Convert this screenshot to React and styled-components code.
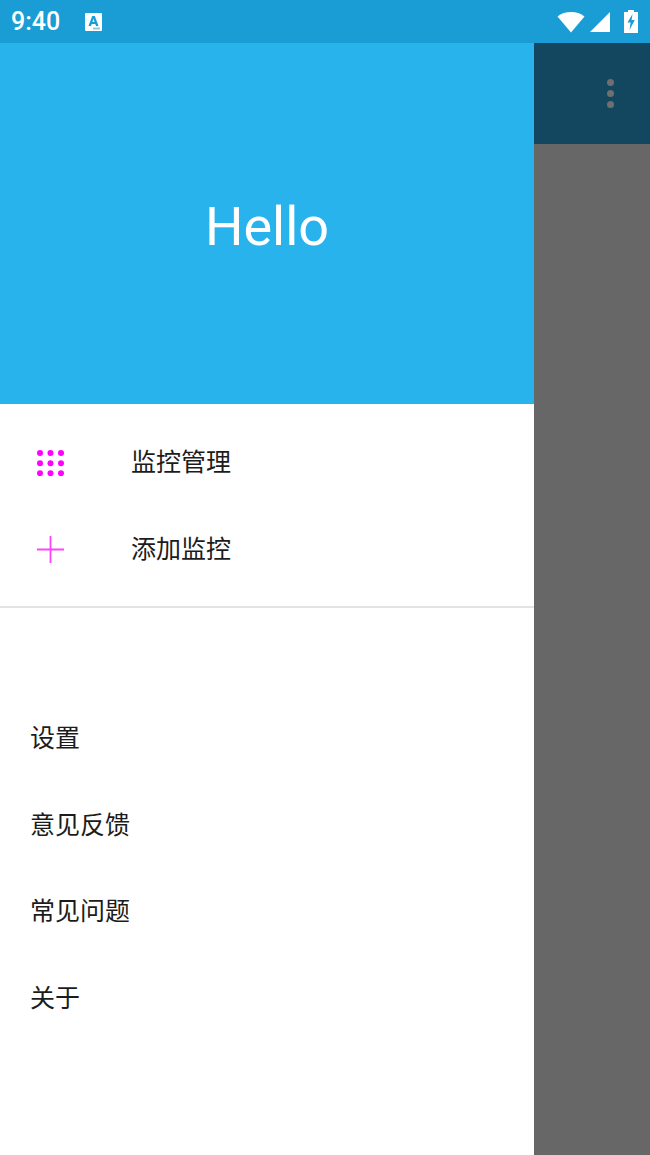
import React from 'react';
import styled, { createGlobalStyle } from 'styled-components';

const Global = createGlobalStyle`
  html, body {
    margin: 0;
    padding: 0;
    background: #fff;
  }
  body {
    font-family: Roboto, "Noto Sans CJK SC", sans-serif;
  }
`;

const Screen = styled.div`
  width: 650px;
  height: 1155px;
  display: flex;
  flex-direction: column;
  overflow: hidden;
`;

const StatusBar = styled.div`
  height: 43px;
  flex: none;
  display: flex;
  align-items: center;
  padding: 0 12px 0 11px;
  box-sizing: border-box;
  background: #199dd4;
  color: #fff;
`;

const Clock = styled.span`
  font-size: 25px;
  font-weight: 500;
  line-height: 43px;
  width: 74px;
`;

const StatusRight = styled.div`
  margin-left: auto;
  display: flex;
  align-items: center;
`;

const Body = styled.div`
  flex: 1;
  display: flex;
  min-height: 0;
`;

const Drawer = styled.aside`
  width: 534px;
  flex: none;
  display: flex;
  flex-direction: column;
  background: #fff;
`;

const DrawerHeader = styled.div`
  height: 361px;
  flex: none;
  display: flex;
  align-items: center;
  justify-content: center;
  background: #28b3ed;
  color: #fff;
  font-size: 54px;
`;

const Hello = styled.span`
  position: relative;
  top: 3px;
`;

const MainList = styled.div`
  padding-top: 15px;
  padding-bottom: 13px;
  border-bottom: 2px solid #e3e3e3;
`;

const IconRow = styled.div`
  height: 87px;
  display: flex;
  align-items: center;
  padding-left: 37px;
`;

const IconSlot = styled.div`
  width: 94px;
  flex: none;
  display: flex;
  align-items: center;
`;

const ItemLabel = styled.span`
  font-family: "Noto Sans CJK SC", sans-serif;
  font-size: 25px;
  margin-bottom: 6px;
  color: #1c1c1c;
`;

const PlainList = styled.div`
  padding-top: 88px;
`;

const PlainRow = styled.div`
  height: 86.6px;
  display: flex;
  align-items: center;
  padding-left: 30px;
`;

const Scrim = styled.div`
  flex: 1;
  display: flex;
  flex-direction: column;
  background: #676767;
`;

const Toolbar = styled.div`
  height: 101px;
  flex: none;
  display: flex;
  align-items: center;
  justify-content: flex-end;
  padding-right: 36px;
  background: #134760;
`;

const MoreDots = styled.div`
  display: flex;
  flex-direction: column;
  gap: 4px;
`;

const Dot = styled.span`
  width: 7px;
  height: 7px;
  border-radius: 50%;
  background: #6f6f6f;
`;

const AppBadge = () => (
  <svg width="17" height="18" viewBox="0 0 17 18" style={{ display: 'block' }}>
    <rect width="17" height="18" rx="1" fill="#fff" />
    <path d="M3.5 13 L7.2 3 H9.8 L13.5 13 H11 L10.3 11 H6.7 L6 13 Z M7.4 9 H9.6 L8.5 5.8 Z" fill="#199dd4" fillRule="evenodd" />
    <rect x="8" y="14.5" width="7" height="2" fill="#8ccbe6" />
  </svg>
);

const WifiIcon = () => (
  <svg width="28" height="22" viewBox="0 0 28 22" style={{ display: 'block' }}>
    <path d="M0.5 5.5 C4 2.3 9 1 14 1 C19 1 24 2.3 27.5 5.5 L14 21.5 Z" fill="#fff" />
  </svg>
);

const SignalIcon = () => (
  <svg width="20" height="20" viewBox="0 0 20 20" style={{ display: 'block', marginLeft: 5 }}>
    <path d="M0 20 L20 0 V20 Z" fill="#fff" />
  </svg>
);

const BatteryIcon = () => (
  <svg width="14" height="23" viewBox="0 0 14 23" style={{ display: 'block', marginLeft: 14 }}>
    <path d="M4 0 H10 V2 H14 V23 H0 V2 H4 Z" fill="#fff" />
    <path d="M8.5 4 L3.5 12.5 H6.6 L5.5 20 L10.8 10 H7.6 Z" fill="#199dd4" />
  </svg>
);

const GridIcon = () => (
  <svg width="27" height="26" viewBox="0 0 27 26" style={{ display: 'block' }}>
    {[3, 13.2, 23.2].map(y =>
      [3, 13.5, 24].map(x => <circle key={`${x}-${y}`} cx={x} cy={y} r="3" fill="#ff00ff" />)
    )}
  </svg>
);

const PlusIcon = () => (
  <svg width="27" height="27" viewBox="0 0 27 27" style={{ display: 'block' }}>
    <path d="M13.5 0 V27 M0 13.5 H27" stroke="#ff44ff" strokeWidth="1.8" fill="none" />
  </svg>
);

const mainItems = [
  { label: '监控管理', icon: <GridIcon /> },
  { label: '添加监控', icon: <PlusIcon /> },
];

const otherItems = ['设置', '意见反馈', '常见问题', '关于'];

export default function App() {
  return (
    <Screen>
      <Global />
      <StatusBar>
        <Clock>9:40</Clock>
        <AppBadge />
        <StatusRight>
          <WifiIcon />
          <SignalIcon />
          <BatteryIcon />
        </StatusRight>
      </StatusBar>
      <Body>
        <Drawer>
          <DrawerHeader>
            <Hello>Hello</Hello>
          </DrawerHeader>
          <MainList>
            {mainItems.map(item => (
              <IconRow key={item.label}>
                <IconSlot>{item.icon}</IconSlot>
                <ItemLabel>{item.label}</ItemLabel>
              </IconRow>
            ))}
          </MainList>
          <PlainList>
            {otherItems.map(label => (
              <PlainRow key={label}>
                <ItemLabel>{label}</ItemLabel>
              </PlainRow>
            ))}
          </PlainList>
        </Drawer>
        <Scrim>
          <Toolbar>
            <MoreDots>
              <Dot />
              <Dot />
              <Dot />
            </MoreDots>
          </Toolbar>
        </Scrim>
      </Body>
    </Screen>
  );
}
